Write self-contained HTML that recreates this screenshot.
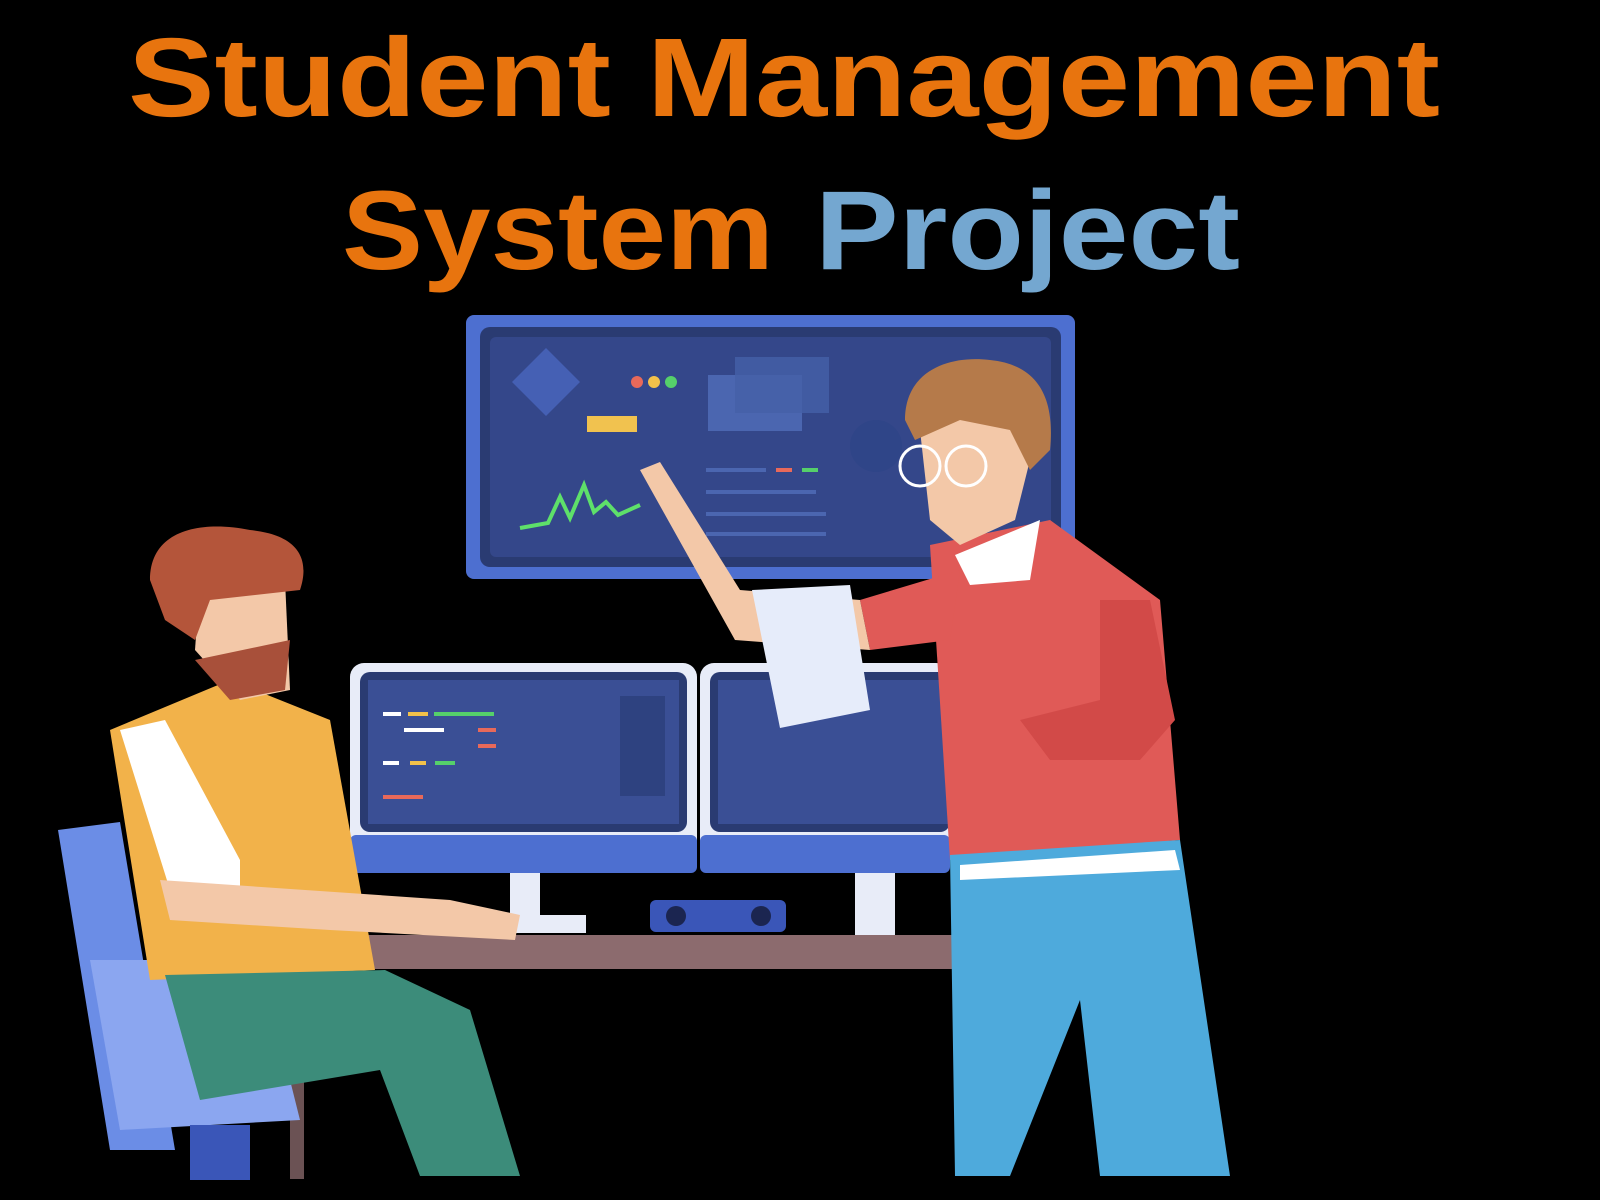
<!DOCTYPE html>
<html><head><meta charset="utf-8"><style>
html,body{margin:0;padding:0;background:#000;width:1600px;height:1200px;overflow:hidden}
svg{display:block}
</style></head><body>
<svg width="1600" height="1200" viewBox="0 0 1600 1200" xmlns="http://www.w3.org/2000/svg">
<rect width="1600" height="1200" fill="#000"/>
<g font-family="'Liberation Sans',sans-serif" font-weight="bold" font-size="112">
<text x="128" y="116" textLength="1312" lengthAdjust="spacingAndGlyphs" fill="#e8740e">Student Management</text>
<text x="342" y="269" textLength="432" lengthAdjust="spacingAndGlyphs" fill="#e8740e">System</text>
<text x="815" y="269" textLength="425" lengthAdjust="spacingAndGlyphs" fill="#74a7d0">Project</text>
</g>
<!-- big monitor -->
<rect x="466" y="315" width="609" height="264" rx="8" fill="#4d6fd0"/>
<rect x="480" y="327" width="581" height="240" rx="10" fill="#2a3b72"/>
<rect x="490" y="337" width="561" height="220" rx="6" fill="#34478a"/>
<polygon points="546,348 580,382 546,416 512,382" fill="#4560b4"/>
<circle cx="637" cy="382" r="6" fill="#e8695a"/><circle cx="654" cy="382" r="6" fill="#f2c14a"/><circle cx="671" cy="382" r="6" fill="#55d06a"/>
<rect x="587" y="416" width="50" height="16" fill="#f1c24f"/>
<rect x="708" y="375" width="94" height="56" fill="#4b66b0"/>
<rect x="735" y="357" width="94" height="56" fill="#4560a8" opacity=".8"/>
<circle cx="876" cy="446" r="26" fill="#2f4588"/>
<polyline points="520,528 548,523 560,497 570,518 584,485 594,512 606,502 618,515 640,505" fill="none" stroke="#5ee06a" stroke-width="4"/>
<g fill="#4b66b0"><rect x="706" y="468" width="60" height="4"/><rect x="706" y="490" width="110" height="4"/><rect x="706" y="512" width="120" height="4"/><rect x="706" y="532" width="120" height="4"/></g>
<rect x="776" y="468" width="16" height="4" fill="#e8695a"/><rect x="802" y="468" width="16" height="4" fill="#55d06a"/>
<!-- lower monitors -->
<rect x="350" y="663" width="347" height="210" rx="14" fill="#e8ecf8"/>
<rect x="360" y="672" width="327" height="160" rx="10" fill="#2a3b72"/>
<rect x="368" y="680" width="311" height="144" fill="#3a4f95"/>
<rect x="350" y="835" width="347" height="38" rx="6" fill="#4d6fd0"/>
<g fill="#fff"><rect x="383" y="712" width="18" height="4"/><rect x="404" y="728" width="40" height="4"/><rect x="383" y="761" width="16" height="4"/></g>
<g fill="#55d06a"><rect x="434" y="712" width="60" height="4"/><rect x="435" y="761" width="20" height="4"/></g>
<g fill="#f2c14a"><rect x="408" y="712" width="20" height="4"/><rect x="410" y="761" width="16" height="4"/></g>
<g fill="#e8695a"><rect x="478" y="728" width="18" height="4"/><rect x="478" y="744" width="18" height="4"/><rect x="383" y="795" width="40" height="4"/></g>
<rect x="620" y="696" width="45" height="100" fill="#2e4280"/>
<rect x="700" y="663" width="250" height="210" rx="14" fill="#e8ecf8"/>
<rect x="710" y="672" width="240" height="160" rx="10" fill="#2a3b72"/>
<rect x="718" y="680" width="232" height="144" fill="#3a4f95"/>
<rect x="700" y="835" width="250" height="38" rx="6" fill="#4d6fd0"/>
<rect x="510" y="873" width="30" height="50" fill="#e8ecf8"/>
<rect x="855" y="873" width="40" height="62" fill="#e8ecf8"/>
<rect x="650" y="900" width="136" height="32" rx="6" fill="#3a56b8"/>
<circle cx="676" cy="916" r="10" fill="#1b2550"/><circle cx="761" cy="916" r="10" fill="#1b2550"/>
<!-- desk -->
<rect x="365" y="935" width="595" height="34" fill="#8c6b6e"/>
<rect x="290" y="969" width="14" height="210" fill="#6b5254"/>
<rect x="394" y="915" width="192" height="18" fill="#e8ecf8"/>
<!-- chair -->
<path d="M58 830 L120 822 L175 1150 L110 1150 Z" fill="#6b8de6"/>
<path d="M90 960 L260 960 L300 1120 L120 1130 Z" fill="#8ba6f0"/>
<rect x="190" y="1125" width="60" height="55" fill="#3a56b8"/>
<!-- left person -->
<path d="M110 730 L230 680 L330 720 L375 970 L150 980 Z" fill="#f2b24a"/>
<path d="M120 730 L165 720 L240 860 L240 900 L170 890 Z" fill="#fff"/>
<path d="M160 880 L450 900 L520 915 L515 940 L330 930 L170 920 Z" fill="#f3c8a8"/>
<path d="M165 975 L385 970 L470 1010 L520 1176 L420 1176 L380 1070 L200 1100 Z" fill="#3c8c7a"/>
<path d="M200 580 L285 580 L290 690 L240 700 L195 650 Z" fill="#f3c8a8"/>
<path d="M195 660 L290 640 L285 690 L230 700 Z" fill="#a8503a"/>
<path d="M150 580 C150 530 200 520 250 530 C300 535 310 560 300 590 L210 600 L195 640 L165 620 Z" fill="#b4553a"/>
<!-- right person -->
<path d="M930 545 L1050 520 L1160 600 L1180 840 L950 860 Z" fill="#e05a57"/>
<path d="M950 855 L1180 840 L1230 1176 L1100 1176 L1080 1000 L1010 1176 L955 1176 Z" fill="#4eaadc"/>
<path d="M860 600 L960 570 L950 640 L870 650 Z" fill="#e05a57"/>
<path d="M1100 600 L1150 600 L1175 720 L1140 760 L1050 760 L1020 720 L1100 700 Z" fill="#d24a48"/>
<path d="M640 470 L660 462 L740 590 L860 600 L870 650 L735 640 Z" fill="#f3c8a8"/>
<path d="M752 590 L850 585 L870 710 L780 728 Z" fill="#e6ecfa"/>
<path d="M955 555 L1040 520 L1030 580 L970 585 Z" fill="#fff"/>
<path d="M920 430 C920 400 960 380 1000 390 L1030 460 L1015 520 L960 545 L930 520 Z" fill="#f3c8a8"/>
<path d="M905 420 C905 370 950 355 990 360 C1040 365 1055 400 1050 450 L1030 470 L1010 430 L960 420 L915 440 Z" fill="#b57a4a"/>
<circle cx="920" cy="466" r="20" fill="none" stroke="#fff" stroke-width="3"/>
<circle cx="966" cy="466" r="20" fill="none" stroke="#fff" stroke-width="3"/>
<path d="M960 865 L1175 850 L1180 870 L960 880 Z" fill="#fff"/>
</svg>
</body></html>
